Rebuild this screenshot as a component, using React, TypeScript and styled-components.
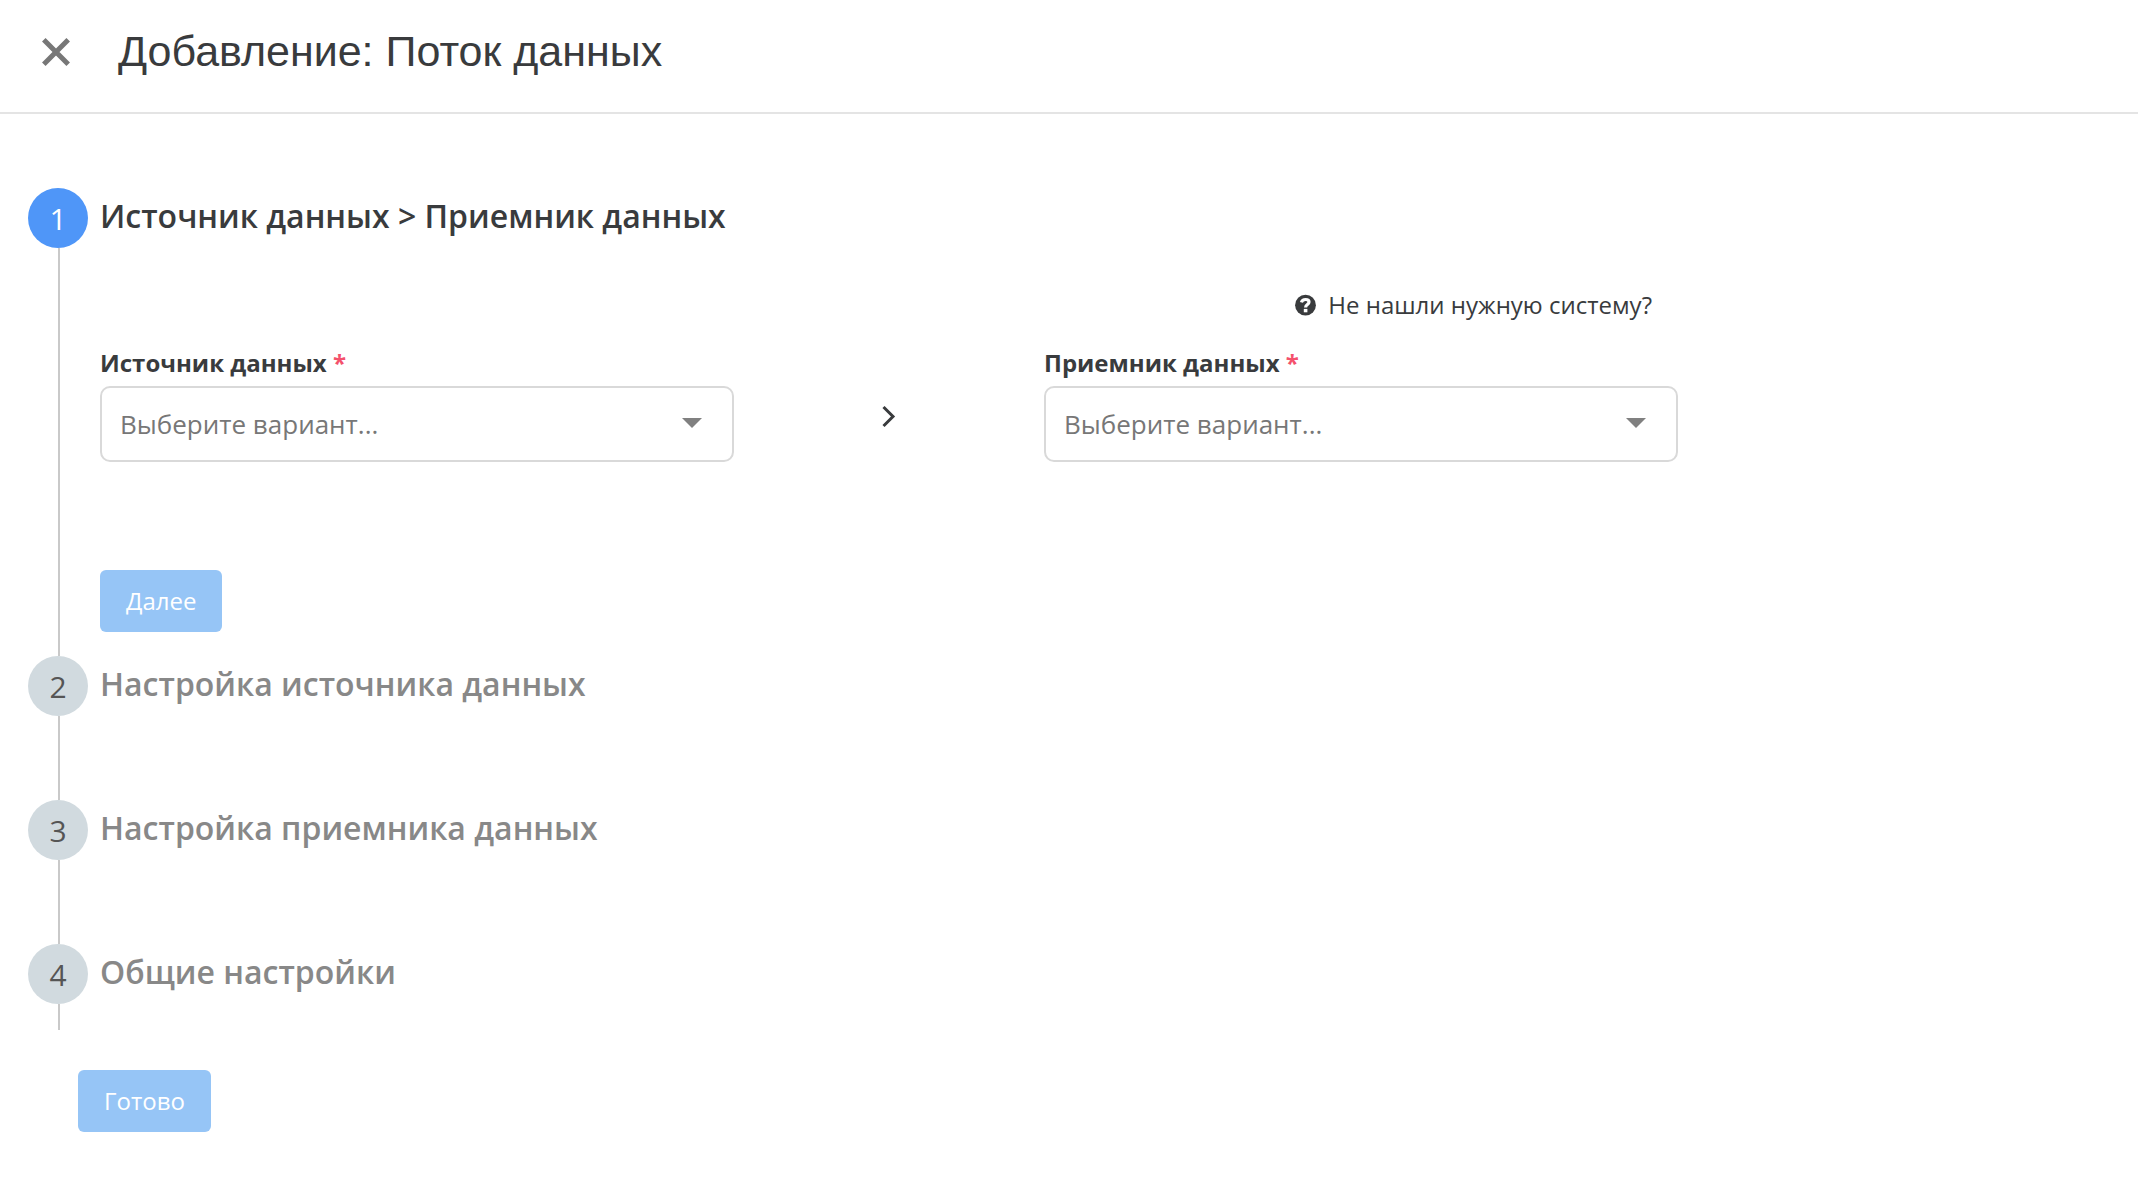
import React, { useId } from "react";
import styled, { createGlobalStyle } from "styled-components";

const color = {
  text: "#393b3d",
  muted: "#888888",
  placeholder: "#777777",
  border: "#d9d9d9",
  line: "#c9c9c9",
  primary: "#4f96f8",
  primaryDisabled: "#96c5f6",
  idle: "#d1dadf",
  danger: "#f4516c",
};

const GlobalStyle = createGlobalStyle`
  *, *::before, *::after { box-sizing: border-box; }
  body {
    margin: 0;
    background: #ffffff;
    color: ${color.text};
    font-family: "Open Sans", "Noto Sans", sans-serif;
    font-size: 24px;
    line-height: 32px;
  }
  button, select { font: inherit; }
`;

const Header = styled.header`
  display: flex;
  align-items: center;
  gap: 44px;
  height: 114px;
  padding: 0 38px 8px;
  border-bottom: 2px solid #e4e4e4;
`;

const CloseButton = styled.button`
  display: flex;
  padding: 4px;
  border: 0;
  background: none;
  color: #777777;
  cursor: pointer;
`;

const Title = styled.h1`
  margin: 0;
  padding-bottom: 2px;
  font-family: "Liberation Sans", Arial, sans-serif;
  font-size: 43px;
  font-weight: 400;
  line-height: 48px;
`;

const Steps = styled.ol`
  margin: 0;
  padding: 74px 28px 0;
  list-style: none;
`;

const StepItem = styled.li`
  display: flex;
  gap: 12px;
`;

const Rail = styled.div`
  display: flex;
  flex: none;
  flex-direction: column;
  width: 60px;

  &::after {
    content: "";
    flex: 1;
    margin-left: 30px;
    border-left: 2px solid ${color.line};
  }
`;

const StepNumber = styled.span<{ $active?: boolean }>`
  display: flex;
  align-items: center;
  justify-content: center;
  height: 60px;
  padding-top: 2px;
  border-radius: 50%;
  background: ${(p) => (p.$active ? color.primary : color.idle)};
  color: ${(p) => (p.$active ? "#ffffff" : "#555555")};
  font-size: 30px;
`;

const StepContent = styled.div<{ $last?: boolean }>`
  flex: 1;
  min-width: 0;
  padding-bottom: ${(p) => (p.$last ? "30px" : "88px")};

  &:has(form) {
    padding-bottom: 24px;
  }
`;

const StepTitle = styled.h2<{ $active?: boolean }>`
  margin: 0;
  color: ${(p) => (p.$active ? color.text : color.muted)};
  font-size: 32px;
  font-weight: 600;
  line-height: 56px;
`;

const Form = styled.form`
  display: grid;
  grid-template-columns: minmax(0, 634px) minmax(0, 310px) minmax(0, 634px);
  padding-top: 45px;
`;

const Help = styled.a`
  grid-column: 3;
  justify-self: end;
  display: flex;
  align-items: center;
  gap: 12px;
  margin: 0 26px 26px 0;
  color: inherit;
  text-decoration: none;
`;

const Field = styled.div`
  display: flex;
  flex-direction: column;
  gap: 7px;
`;

const FieldLabel = styled.label`
  font-weight: 700;
`;

const Required = styled.span`
  color: ${color.danger};
`;

const SelectBox = styled.div`
  position: relative;
  color: #808080;

  svg {
    position: absolute;
    top: 32px;
    right: 32px;
    pointer-events: none;
  }
`;

const Select = styled.select`
  display: block;
  width: 100%;
  height: 76px;
  padding: 0 64px 0 18px;
  border: 2px solid ${color.border};
  border-radius: 10px;
  background: #ffffff;
  color: ${color.placeholder};
  font-size: 26px;
  appearance: none;
`;

const Arrow = styled.div`
  display: flex;
  justify-content: center;
  padding-top: 58px;
`;

const Button = styled.button`
  height: 62px;
  padding: 0 26px;
  border: 0;
  border-radius: 6px;
  background: ${color.primaryDisabled};
  color: #ffffff;
`;

const NextButton = styled(Button)`
  justify-self: start;
  margin-top: 108px;
`;

const Footer = styled.footer`
  padding: 40px 78px 56px;
`;

function SelectField({ label }: { label: string }) {
  const id = useId();
  return (
    <Field>
      <FieldLabel htmlFor={id}>
        {label} <Required>*</Required>
      </FieldLabel>
      <SelectBox>
        <Select id={id} defaultValue="">
          <option value="">Выберите вариант...</option>
        </Select>
        <svg width="20" height="10" viewBox="0 0 20 10" aria-hidden="true">
          <path d="M0 0H20L10 10Z" fill="currentColor" />
        </svg>
      </SelectBox>
    </Field>
  );
}

interface StepProps {
  number: number;
  title: string;
  active?: boolean;
  last?: boolean;
  children?: React.ReactNode;
}

function Step({ number, title, active, last, children }: StepProps) {
  return (
    <StepItem>
      <Rail>
        <StepNumber $active={active}>{number}</StepNumber>
      </Rail>
      <StepContent $last={last}>
        <StepTitle $active={active}>{title}</StepTitle>
        {children}
      </StepContent>
    </StepItem>
  );
}

export default function App() {
  return (
    <>
      <GlobalStyle />
      <Header>
        <CloseButton type="button" aria-label="Закрыть">
          <svg width="28" height="28" viewBox="0 0 28 28" fill="none" stroke="currentColor" strokeWidth="5">
            <path d="M1.8 1.8L26.2 26.2M26.2 1.8L1.8 26.2" />
          </svg>
        </CloseButton>
        <Title>Добавление: Поток данных</Title>
      </Header>
      <main>
        <Steps>
          <Step number={1} title="Источник данных > Приемник данных" active>
            <Form>
              <Help href="#help">
                <svg width="21" height="22" viewBox="0 0 21 22" aria-hidden="true">
                  <circle cx="10.5" cy="11.2" r="10.4" fill="currentColor" />
                  <path
                    d="M6.4 8.4C7 6.4 8.5 5.5 10.6 5.5C12.8 5.5 14 6.6 14 8.1C14 10.6 10.6 10.5 10.6 13.4"
                    fill="none"
                    stroke="#ffffff"
                    strokeWidth="3.2"
                  />
                  <path d="M8.8 14.9H12.4V18.3H8.8Z" fill="#ffffff" />
                </svg>
                Не нашли нужную систему?
              </Help>
              <SelectField label="Источник данных" />
              <Arrow>
                <svg width="16" height="24" viewBox="0 0 16 24" fill="none" stroke={color.text} strokeWidth="3">
                  <path d="M2.5 2L12 11.5L2.5 21" />
                </svg>
              </Arrow>
              <SelectField label="Приемник данных" />
              <NextButton type="button" disabled>
                Далее
              </NextButton>
            </Form>
          </Step>
          <Step number={2} title="Настройка источника данных" />
          <Step number={3} title="Настройка приемника данных" />
          <Step number={4} title="Общие настройки" last />
        </Steps>
      </main>
      <Footer>
        <Button type="button" disabled>
          Готово
        </Button>
      </Footer>
    </>
  );
}
